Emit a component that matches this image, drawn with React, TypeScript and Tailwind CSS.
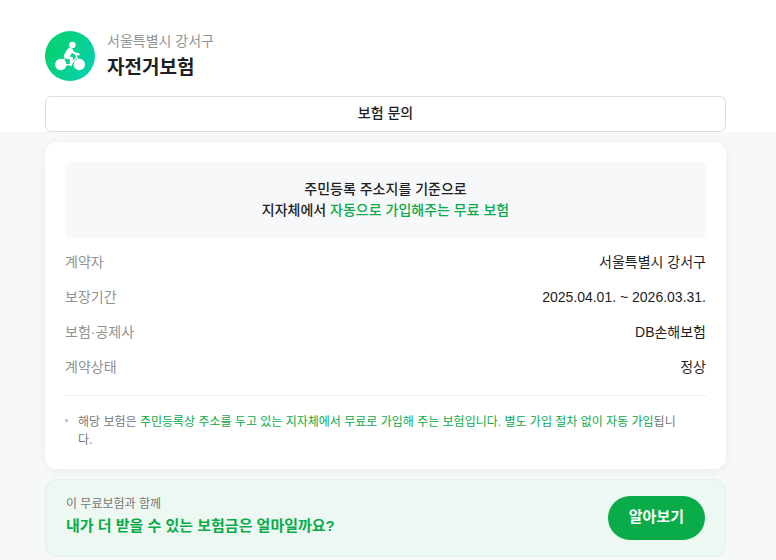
import React from 'react';

interface DetailRow {
  label: string;
  value: string;
}

const details: DetailRow[] = [
  { label: '계약자', value: '서울특별시 강서구' },
  { label: '보장기간', value: '2025.04.01. ~ 2026.03.31.' },
  { label: '보험·공제사', value: 'DB손해보험' },
  { label: '계약상태', value: '정상' },
];

function BikeLogo() {
  return (
    <svg viewBox="0 0 50 50" className="w-[50px] h-[50px] shrink-0" aria-hidden="true">
      <defs>
        <linearGradient id="bike-bg" x1="0" y1="0.2" x2="1" y2="0.8">
          <stop offset="0" stopColor="#06d169" />
          <stop offset="1" stopColor="#06d0b0" />
        </linearGradient>
      </defs>
      <circle cx="25" cy="25" r="25" fill="url(#bike-bg)" />
      <g fill="#fff">
        <circle cx="15.8" cy="33.5" r="5.7" />
        <circle cx="34.3" cy="33.5" r="5.7" />
        <circle cx="27.4" cy="14" r="3.2" />
      </g>
      <g fill="none" stroke="#fff" strokeLinecap="round" strokeLinejoin="round">
        <path d="M24.8 19.8l-2.9 5" strokeWidth="5.8" />
        <path d="M21.6 26.4l5.2 1-.9 6.2" strokeWidth="2.8" />
        <path d="M26.2 18.8l2.6 3.2 4.8 1.4" strokeWidth="2.2" />
        <path d="M31 24l3.2 9.5M15.8 33.5l3.6-5.5M15.8 33.7h10M26 33.2l5.8-7" strokeWidth="1.3" />
      </g>
    </svg>
  );
}

export default function App() {
  return (
    <div className="min-h-screen bg-[#f7f8fa] text-[#1e1e23] font-['Liberation_Sans','Noto_Sans_CJK_KR',sans-serif]">
      <header className="bg-white pt-[31px] pl-[45px] pr-[50px]">
        <div className="flex items-center gap-3">
          <BikeLogo />
          <div>
            <p className="text-[14px] leading-5 text-[#929294]">서울특별시 강서구</p>
            <h1 className="pt-1 text-[19px] leading-[26px] font-bold">자전거보험</h1>
          </div>
        </div>
        <button
          type="button"
          className="block w-full h-9 mt-[15px] pb-0.5 rounded-md border border-[#dcdee0] bg-white text-[14px] leading-5 font-medium"
        >
          보험 문의
        </button>
      </header>

      <main className="pt-2.5 pl-[45px] pr-[50px]">
        <section className="rounded-xl bg-white p-5 shadow-[0_2px_12px_rgba(0,0,0,0.05)]">
          <p className="rounded-md bg-[#f7f8fa] py-[17px] text-center text-[14px] leading-[21px] font-medium">
            주민등록 주소지를 기준으로
            <br />
            지자체에서 <em className="not-italic text-[#0aab49]">자동으로 가입해주는 무료 보험</em>
          </p>

          <dl className="mt-3.5 space-y-3.5 text-[14px] leading-[21px]">
            {details.map((row) => (
              <div key={row.label} className="flex justify-between">
                <dt className="text-[#929294]">{row.label}</dt>
                <dd className="text-right">{row.value}</dd>
              </div>
            ))}
          </dl>

          <ul className="mt-[17px] border-t border-[#ecedef] pt-[17px]">
            <li className="flex gap-2.5 text-[12px] leading-[18px] text-[#767678]">
              <span className="w-[3px] h-[3px] mt-1.5 shrink-0 bg-[#c5c8cc]" />
              <span>
                해당 보험은{' '}
                <em className="not-italic text-[#0aab49]">
                  주민등록상 주소를 두고 있는 지자체에서 무료로 가입해 주는 보험입니다. 별도 가입 절차 없이 자동 가입
                </em>
                됩니
                <br />
                다.
              </span>
            </li>
          </ul>
        </section>

        <section className="mt-2.5 flex items-center justify-between rounded-xl border border-[#e0f1e8] bg-[#edf8f2] px-5 py-[15px]">
          <div className="pb-0.5">
            <p className="text-[12px] leading-[18px] text-[#767678]">이 무료보험과 함께</p>
            <strong className="block text-[15px] leading-[26px] font-bold text-[#0aab49]">
              내가 더 받을 수 있는 보험금은 얼마일까요?
            </strong>
          </div>
          <button
            type="button"
            className="h-11 shrink-0 rounded-full bg-[#0aab49] px-[21px] pb-0.5 text-[15px] leading-5 font-bold text-white"
          >
            알아보기
          </button>
        </section>
      </main>
    </div>
  );
}
